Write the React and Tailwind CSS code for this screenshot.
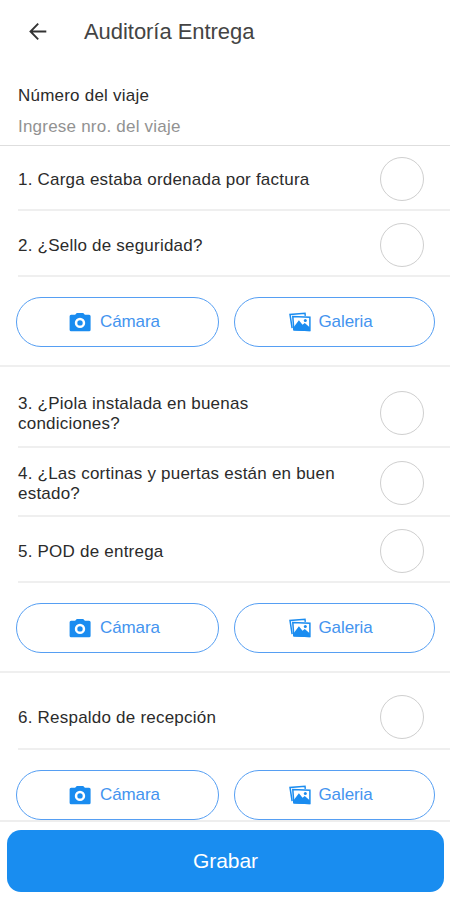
import React from 'react';

function ArrowIcon() {
  return (
    <svg className="h-[18px] w-[18px]" viewBox="0 0 18 18" fill="none" stroke="#333" strokeWidth="1.9">
      <path d="M17.3 8.500H1.800M9.200 0.700 1.500 8.500l7.700 7.800" />
    </svg>
  );
}

function CameraIcon() {
  return (
    <svg className="h-5 w-[22px]" viewBox="0 0 22 20" fill="#1a8cf0">
      <path
        fillRule="evenodd"
        d="M7.800 1h6.400l1.700 1.700h4.200q1.500 0 1.500 1.500v13.500q0 1.500-1.500 1.500H2.100q-1.500 0-1.500-1.500V4.200q0-1.500 1.500-1.500h4zM11 5.700a5.200 5.200 0 1 0 0 10.400a5.200 5.200 0 0 0 0-10.400z"
      />
      <circle cx="11" cy="10.900" r="2.700" />
    </svg>
  );
}

function GalleryIcon() {
  return (
    <svg className="h-5 w-[22px]" viewBox="0 0 22 20" fill="none" stroke="#1a8cf0" strokeWidth="1.5">
      <path d="M3.100 16.200 1 2.400 16 1.200 16.300 3.800" />
      <path d="M4.800 17.800 3.800 4.600 20.900 5.200V18.500L4.800 17.800Z" />
      <path
        fill="#1a8cf0"
        stroke="none"
        d="M4.800 15 9.900 8.200 13.500 12.800 15.800 10.900 20.900 15.600V19.200L4.800 18.500Z"
      />
      <circle cx="16.300" cy="8.500" r="1.500" fill="#1a8cf0" stroke="none" />
    </svg>
  );
}

function Question({ children, className }) {
  return (
    <div className={`ml-[18px] flex items-center justify-between border-b-2 border-[#efefef] pr-[26px] ${className}`}>
      <p className="w-[325px] pt-[3px] text-[17px] leading-[20.5px] tracking-[0.22px] text-[#2b2b2b]">{children}</p>
      <button className="h-11 w-11 shrink-0 rounded-full border border-[#cfcfcf]" aria-label="Marcar" />
    </div>
  );
}

function PhotoButtons({ className }) {
  return (
    <div className={`flex gap-[15px] pl-4 pr-[15px] pt-5 ${className}`}>
      <button className="flex h-[50px] w-[203px] items-center gap-[9px] rounded-full border border-[#569ff3] pl-[52px] text-[17px] tracking-[-0.1px] text-[#4494ef]">
        <CameraIcon />
        Cámara
      </button>
      <button className="flex h-[50px] w-[202px] items-center gap-2 rounded-full border border-[#569ff3] pl-[54px] text-[17px] tracking-[-0.1px] text-[#4494ef]">
        <GalleryIcon />
        Galeria
      </button>
    </div>
  );
}

export default function App() {
  return (
    <div className="flex h-[900px] w-[450px] flex-col overflow-hidden bg-white font-['Liberation_Sans',Arial,sans-serif]">
      <header className="flex h-16 shrink-0 items-center gap-[37px] pl-[29px]">
        <ArrowIcon />
        <h1 className="pb-0.5 text-[22px] tracking-[-0.05px] text-[#444]">Auditoría Entrega</h1>
      </header>
      <main className="h-[756px] shrink-0 overflow-hidden">
        <label className="flex h-[82px] flex-col border-b border-[#dedede] pl-[18px] pt-[21px] text-[17px] tracking-[0.22px]">
          <span className="leading-[22px] text-[#2b2b2b]">Número del viaje</span>
          <span className="mt-[9px] leading-[22px] text-[#929292]">Ingrese nro. del viaje</span>
        </label>
        <Question className="h-[65px] pt-0.5">1. Carga estaba ordenada por factura</Question>
        <Question className="h-[66px] pt-[3px]">2. ¿Sello de seguridad?</Question>
        <PhotoButtons className="h-[90px] border-b-2 border-[#efefef]" />
        <Question className="h-[81px] pt-3">
          3. ¿Piola instalada en buenas
          <br />
          condiciones?
        </Question>
        <Question className="h-[69px] pt-0.5">4. ¿Las cortinas y puertas están en buen estado?</Question>
        <Question className="h-[66px] pt-[3px]">5. POD de entrega</Question>
        <PhotoButtons className="h-[90px] border-b-2 border-[#efefef]" />
        <Question className="h-[77px] pt-[13px]">6. Respaldo de recepción</Question>
        <PhotoButtons className="h-[90px]" />
      </main>
      <footer className="h-20 shrink-0 border-t-2 border-[#eeeeee] bg-white pl-[7px] pr-1.5 pt-2">
        <button className="h-[62px] w-full rounded-[14px] bg-[#198df0] text-[21px] tracking-[-0.1px] text-white">Grabar</button>
      </footer>
    </div>
  );
}
